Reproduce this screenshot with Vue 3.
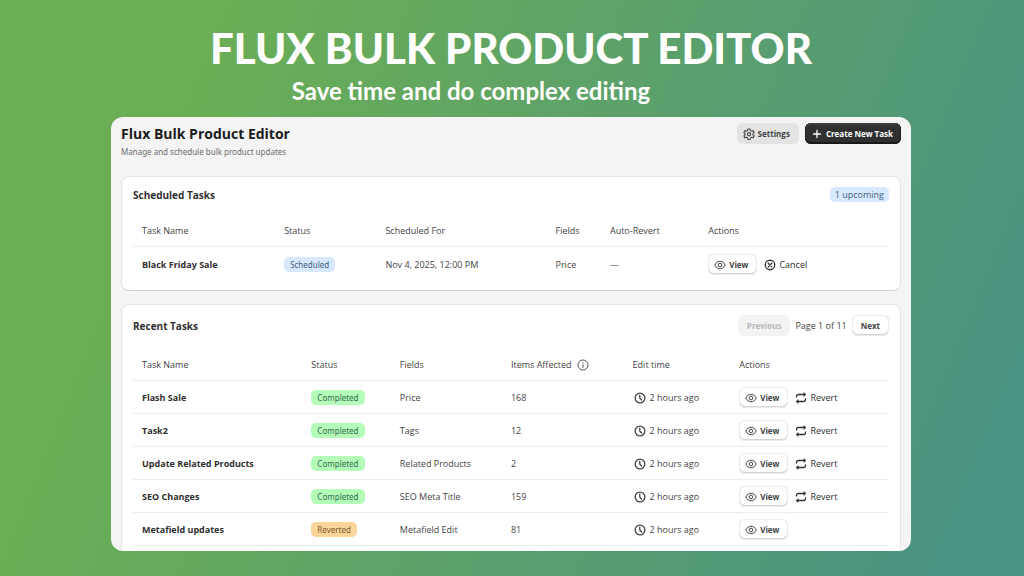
<script setup>
const scheduled = [
  { name: 'Black Friday Sale', status: 'Scheduled', when: 'Nov 4, 2025, 12:00 PM', fields: 'Price', revert: '—' },
]
const recent = [
  { name: 'Flash Sale', status: 'Completed', fields: 'Price', items: 168 },
  { name: 'Task2', status: 'Completed', fields: 'Tags', items: 12 },
  { name: 'Update Related Products', status: 'Completed', fields: 'Related Products', items: 2 },
  { name: 'SEO Changes', status: 'Completed', fields: 'SEO Meta Title', items: 159 },
  { name: 'Metafield updates', status: 'Reverted', fields: 'Metafield Edit', items: 81 },
]
</script>

<template>
  <div class="page">
    <header class="hero">
      <h1>FLUX BULK PRODUCT EDITOR</h1>
      <p>Save time and do complex editing</p>
    </header>

    <main class="panel">
      <div class="top">
        <div class="intro">
          <h2>Flux Bulk Product Editor</h2>
          <p>Manage and schedule bulk product updates</p>
        </div>
        <div class="top-actions">
          <button type="button" class="btn settings">
            <svg class="icon" viewBox="0 0 24 24" fill="none" stroke="currentColor" stroke-width="2.200" stroke-linejoin="round">
              <path d="M9.800 2h4.400l.7 3.200 2 1.200 3.100-1.100 2.300 3.900-2.500 2.200v2.200l2.500 2.200-2.300 3.900-3.100-1.100-2 1.200-.7 3.200H9.800l-.7-3.200-2-1.200L4 19.700l-2.300-3.900 2.500-2.200v-2.200L1.700 9.200 4 5.300l3.100 1.100 2-1.200z" />
              <circle cx="12" cy="12.500" r="3.200" />
            </svg>
            Settings
          </button>
          <button type="button" class="btn create">
            <svg class="icon small" viewBox="0 0 10 10" fill="none" stroke="currentColor" stroke-width="1.300" stroke-linecap="round">
              <path d="M5 1.500v7M1.500 5h7" />
            </svg>
            Create New Task
          </button>
        </div>
      </div>

      <section class="card">
        <div class="card-head">
          <h3>Scheduled Tasks</h3>
          <span class="badge count scheduled">1 upcoming</span>
        </div>
        <table class="upcoming">
          <colgroup>
            <col class="u-name" /><col class="u-status" /><col class="u-when" /><col class="u-fields" /><col class="u-revert" /><col />
          </colgroup>
          <thead>
            <tr>
              <th>Task Name</th><th>Status</th><th>Scheduled For</th><th>Fields</th><th>Auto-Revert</th><th>Actions</th>
            </tr>
          </thead>
          <tbody>
            <tr v-for="t in scheduled" :key="t.name">
              <td class="name">{{ t.name }}</td>
              <td><span class="badge scheduled">{{ t.status }}</span></td>
              <td>{{ t.when }}</td>
              <td>{{ t.fields }}</td>
              <td>{{ t.revert }}</td>
              <td>
                <div class="actions">
                  <button type="button" class="btn raised">
                    <svg class="icon" viewBox="0 0 24 24" fill="none" stroke="currentColor" stroke-width="2">
                      <path d="M1.500 12C4 7 7.600 4.500 12 4.500S20 7 22.500 12C20 17 16.400 19.500 12 19.500S4 17 1.500 12z" />
                      <circle cx="12" cy="12" r="3.700" />
                    </svg>
                    View
                  </button>
                  <button type="button" class="plain">
                    <svg class="icon" viewBox="0 0 24 24" fill="none" stroke="currentColor" stroke-width="2.600" stroke-linecap="round">
                      <circle cx="12" cy="12" r="9.500" />
                      <path d="M8.500 8.500l7 7M15.500 8.500l-7 7" />
                    </svg>
                    Cancel
                  </button>
                </div>
              </td>
            </tr>
          </tbody>
        </table>
      </section>

      <section class="card">
        <div class="card-head">
          <h3>Recent Tasks</h3>
          <nav class="pager" aria-label="Pages">
            <button type="button" class="btn wide" disabled>Previous</button>
            <span>Page 1 of 11</span>
            <button type="button" class="btn raised wide">Next</button>
          </nav>
        </div>
        <table>
          <colgroup>
            <col class="r-name" /><col class="r-status" /><col class="r-fields" /><col class="r-items" /><col class="r-time" /><col />
          </colgroup>
          <thead>
            <tr>
              <th>Task Name</th>
              <th>Status</th>
              <th>Fields</th>
              <th>
                <div class="with-info">
                  Items Affected
                  <svg class="icon" viewBox="0 0 24 24" fill="none" stroke="currentColor" stroke-width="1.800">
                    <circle cx="12" cy="12" r="10" />
                    <path d="M12 10.500v7M12 6.200v2.400" />
                  </svg>
                </div>
              </th>
              <th>Edit time</th>
              <th>Actions</th>
            </tr>
          </thead>
          <tbody>
            <tr v-for="t in recent" :key="t.name">
              <td class="name">{{ t.name }}</td>
              <td><span class="badge" :class="t.status.toLowerCase()">{{ t.status }}</span></td>
              <td>{{ t.fields }}</td>
              <td>{{ t.items }}</td>
              <td>
                <div class="time">
                  <svg class="icon" viewBox="0 0 24 24" fill="none" stroke="currentColor" stroke-width="2.600" stroke-linecap="round" stroke-linejoin="round">
                    <circle cx="12" cy="12" r="9.700" />
                    <path d="M11.500 6.500V12l3.800 4" />
                  </svg>
                  2 hours ago
                </div>
              </td>
              <td>
                <div class="actions">
                  <button type="button" class="btn raised">
                    <svg class="icon" viewBox="0 0 24 24" fill="none" stroke="currentColor" stroke-width="2">
                      <path d="M1.500 12C4 7 7.600 4.500 12 4.500S20 7 22.500 12C20 17 16.400 19.500 12 19.500S4 17 1.500 12z" />
                      <circle cx="12" cy="12" r="3.700" />
                    </svg>
                    View
                  </button>
                  <button v-if="t.status === 'Completed'" type="button" class="plain">
                    <svg class="icon" viewBox="0 0 24 24" fill="none" stroke="currentColor" stroke-width="2.600" stroke-linecap="round" stroke-linejoin="round">
                      <path d="M3 10V8.500a3.500 3.500 0 0 1 3.500-3.500H19M21 14v1.500a3.500 3.500 0 0 1-3.500 3.500H5" />
                      <path d="M18 1.500L22 5l-4 3.500zM6 15.500L2 19l4 3.500z" fill="currentColor" stroke-width="1" />
                    </svg>
                    Revert
                  </button>
                </div>
              </td>
            </tr>
          </tbody>
        </table>
      </section>
    </main>
  </div>
</template>

<style>
body {
  margin: 0;
}
</style>

<style scoped>
.page {
  box-sizing: border-box;
  height: 100vh;
  display: flex;
  flex-direction: column;
  padding: 24px 113px 25px 111px;
  background: linear-gradient(112deg, #6bae55 0%, #6bae55 18%, #4a9283 95%);
  font-family: "Open Sans", "Noto Sans", sans-serif;
  font-size: 9px;
  line-height: 14px;
  color: #444;
}
h1, h2, h3, p {
  margin: 0;
}
.hero {
  color: #fff;
  font-family: Lato, sans-serif;
  text-align: center;
}
.hero h1 {
  font-size: 42px;
  line-height: 48px;
  font-weight: 900;
  white-space: nowrap;
}
.hero p {
  margin-right: 80px;
  font-size: 24px;
  line-height: 38px;
  font-weight: 700;
  padding-bottom: 7px;
}
.panel {
  flex: 1;
  min-height: 0;
  overflow: hidden;
  display: flex;
  flex-direction: column;
  gap: 13px;
  padding: 0 10px;
  background: #f4f4f4;
  border-radius: 12px;
}
.top {
  display: flex;
  justify-content: space-between;
  padding-top: 6px;
  height: 40px;
  flex: none;
}
.intro h2 {
  font-size: 14px;
  line-height: 22px;
  font-weight: 700;
  color: #1c1c1c;
}
.intro p {
  font-family: "Noto Sans", sans-serif;
  font-size: 8px;
  line-height: 14px;
  color: #6c6c6c;
}
.top-actions {
  display: flex;
  align-items: flex-start;
  gap: 6px;
}
button {
  font-family: inherit;
  border: 0;
  white-space: nowrap;
}
.btn {
  display: inline-flex;
  align-items: center;
  gap: 3px;
  height: 21px;
  padding: 0 9px 0 6px;
  border-radius: 6px;
  font-size: 8px;
  line-height: 14px;
  font-weight: 700;
  color: #444;
}
.settings {
  background: #e3e3e3;
}
.create {
  gap: 4px;
  padding: 0 8px 0 7px;
  background: #303030;
  color: #fff;
  box-shadow: inset 0 -1px 0 1px #1a1a1a, inset 0 1px 0 1px #3e3e3e;
}
.raised {
  background: #fff;
  box-shadow: inset 0 0 0 1px #ebebeb, inset 0 -1px 0 1px #d4d4d4;
}
.wide {
  padding: 0 9px;
}
.btn:disabled {
  background: #f3f3f3;
  color: #b8b8b8;
}
.icon {
  width: 12px;
  height: 12px;
  flex: none;
}
.icon.small {
  width: 10px;
  height: 10px;
}
.card {
  flex: none;
  padding: 10px 11px 9px;
  background: #fff;
  border: 1px solid #e6e6e6;
  border-bottom-color: #d4d4d4;
  border-radius: 8px;
}
.card-head {
  display: flex;
  align-items: center;
  justify-content: space-between;
  margin-bottom: 12px;
}
h3 {
  font-size: 10px;
  line-height: 14px;
  font-weight: 700;
  color: #303030;
}
.pager {
  display: flex;
  align-items: center;
  gap: 5px;
}
.badge {
  display: block;
  width: fit-content;
  padding: 0 6px;
  border-radius: 5px;
  font-family: "Noto Sans", sans-serif;
  font-size: 8px;
  line-height: 15px;
}
.badge.count {
  padding: 0 5px;
  font-family: inherit;
  font-size: 9px;
}
.scheduled {
  background: #d8e9ff;
  color: #43607d;
}
.completed {
  background: #b3fdb9;
  color: #346b50;
}
.reverted {
  background: #fbd59a;
  color: #7c602c;
}
table {
  width: 100%;
  table-layout: fixed;
  border-collapse: separate;
  border-spacing: 0;
}
th, td {
  box-sizing: border-box;
  padding: 1px 0 0 9px;
  height: 33px;
  text-align: left;
  vertical-align: middle;
  font-weight: 400;
  white-space: nowrap;
  border-bottom: 1px solid #ededed;
}
.upcoming td {
  height: 34px;
  border-bottom: 0;
}
td.name {
  font-weight: 700;
  color: #303030;
}
.u-name { width: 18.8%; }
.u-status { width: 13.4%; }
.u-when { width: 22.5%; }
.u-fields { width: 7.2%; }
.u-revert { width: 13%; }
.r-name { width: 22.4%; }
.r-status { width: 11.7%; }
.r-fields { width: 14.7%; }
.r-items { width: 16.1%; }
.r-time { width: 14.1%; }
.with-info, .time, .actions, .plain {
  display: flex;
  align-items: center;
}
.with-info {
  gap: 5px;
}
.time {
  gap: 4px;
  padding-left: 1px;
}
.actions {
  gap: 7px;
}
.plain {
  gap: 3px;
  padding: 0;
  background: none;
  font-size: 9px;
  line-height: 14px;
  color: #303030;
}
</style>
